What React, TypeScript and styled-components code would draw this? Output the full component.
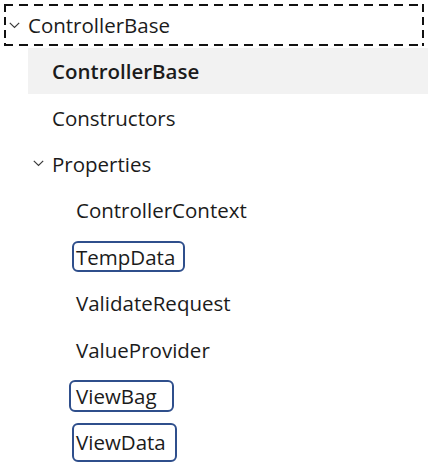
import React from "react";
import styled, { createGlobalStyle } from "styled-components";

const GlobalStyle = createGlobalStyle`
  body {
    margin: 0;
    background: #ffffff;
    font-family: "Open Sans", "Noto Sans", sans-serif;
    color: #1b1b1b;
  }
`;

interface INode {
  label: string;
  expanded?: boolean;
  selected?: boolean;
  focused?: boolean;
  mark?: { left: number; right: number; height: number };
  children?: INode[];
}

const tree: INode = {
  label: "ControllerBase",
  expanded: true,
  focused: true,
  children: [
    { label: "ControllerBase", selected: true },
    { label: "Constructors" },
    {
      label: "Properties",
      expanded: true,
      children: [
        { label: "ControllerContext" },
        { label: "TempData", mark: { left: 2, right: 8, height: 31 } },
        { label: "ValidateRequest" },
        { label: "ValueProvider" },
        { label: "ViewBag", mark: { left: 5, right: 15, height: 32 } },
        { label: "ViewData", mark: { left: 2, right: 9, height: 39 } },
      ],
    },
  ],
};

const Chevron = () => (
  <svg width="11" height="7" viewBox="0 0 11 7">
    <path d="M0.8 0.8 L5.5 5.5 L10.2 0.8" fill="none" stroke="#3a3a3a" strokeWidth="1.2" />
  </svg>
);

const TreeNode = ({ node }: { node: INode }) => {
  return (
    <Item>
      <Row $selected={node.selected} $focused={node.focused}>
        <Toggle>{node.children ? <Chevron /> : null}</Toggle>
        <Label $selected={node.selected}>
          {node.mark ? (
            <Mark $left={node.mark.left} $right={node.mark.right} $height={node.mark.height}>
              {node.label}
            </Mark>
          ) : (
            node.label
          )}
        </Label>
      </Row>
      {node.children && node.expanded ? (
        <Group>
          {node.children.map((child, i) => (
            <TreeNode key={child.label + i} node={child} />
          ))}
        </Group>
      ) : null}
    </Item>
  );
};

const App = () => {
  return (
    <>
      <GlobalStyle />
      <TreeView>
        <TreeNode node={tree} />
      </TreeView>
    </>
  );
};

export default App;

const TreeView = styled.ul`
  list-style: none;
  margin: 0;
  padding: 4px 0 0 4px;
  width: 428px;
  box-sizing: border-box;
`;

const Item = styled.li`
  margin: 0;
  padding: 0;
`;

const Group = styled.ul`
  list-style: none;
  margin: 0;
  padding: 0 0 0 24px;
`;

const dash = "#111111";

const Row = styled.div<{ $selected?: boolean; $focused?: boolean }>`
  display: flex;
  align-items: center;
  height: ${(p) => (p.$focused ? "42px" : "46.4px")};
  margin: ${(p) => (p.$focused ? "0 4px 2px 0" : "0")};
  background-color: ${(p) => (p.$selected ? "#f2f2f2" : "transparent")};
  ${(p) =>
    p.$focused &&
    `
    background:
      linear-gradient(90deg, ${dash} 60%, transparent 0) top left / 15px 2px repeat-x,
      linear-gradient(90deg, ${dash} 60%, transparent 0) bottom left / 15px 2px repeat-x,
      linear-gradient(180deg, ${dash} 60%, transparent 0) top left / 2px 13px repeat-y,
      linear-gradient(180deg, ${dash} 60%, transparent 0) top right / 2px 13px repeat-y;
  `}
`;

const Toggle = styled.span`
  display: flex;
  align-items: center;
  justify-content: center;
  width: 20px;
  flex: none;
  margin-right: 4px;
`;

const Label = styled.span<{ $selected?: boolean }>`
  font-size: 20.5px;
  font-weight: ${(p) => (p.$selected ? 600 : 400)};
  white-space: nowrap;
  display: flex;
  align-items: center;
`;

const Mark = styled.span<{ $left: number; $right: number; $height: number }>`
  display: inline-flex;
  align-items: center;
  box-sizing: border-box;
  height: ${(p) => p.$height}px;
  padding: 0 ${(p) => p.$right}px 0 ${(p) => p.$left}px;
  margin: 0 -${(p) => p.$right + 2}px 0 -${(p) => p.$left + 2}px;
  border: 2px solid #2f4f8c;
  border-radius: 6px;
`;
